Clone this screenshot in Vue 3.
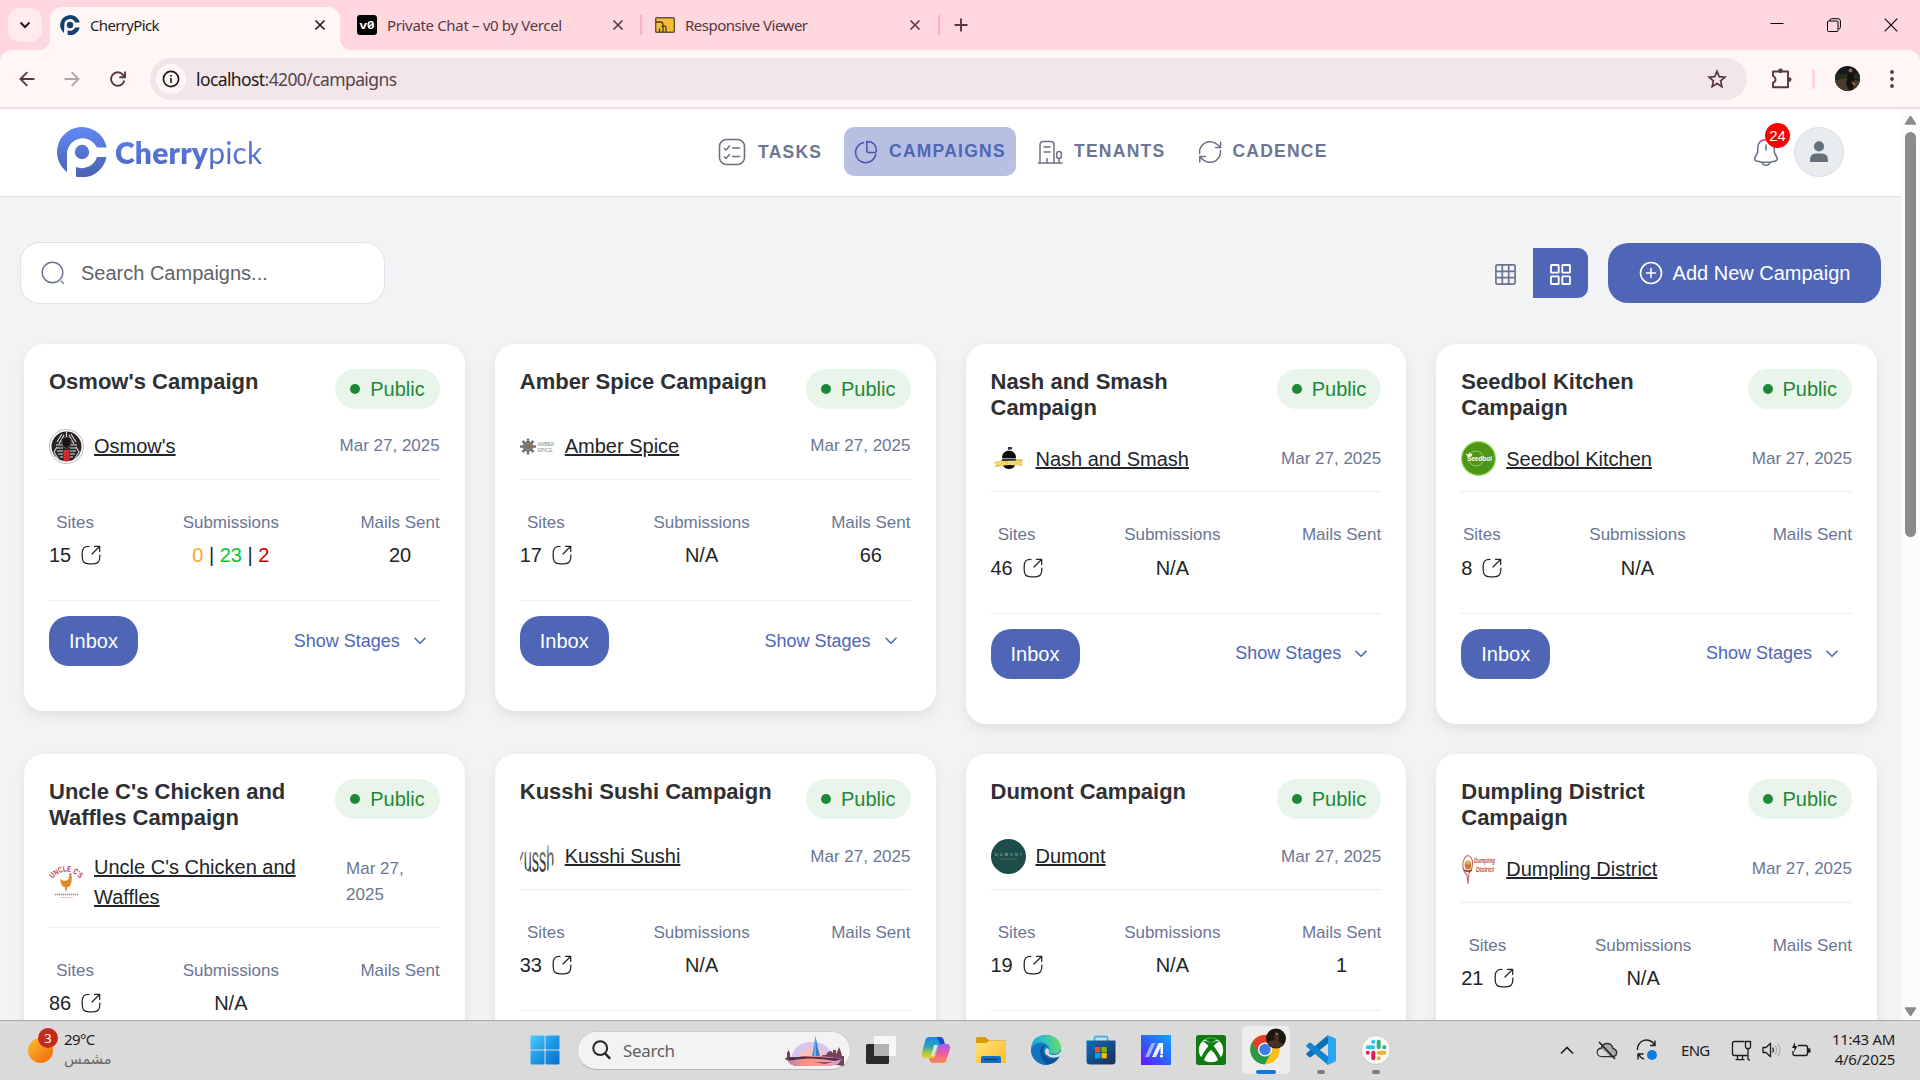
<script setup>
const campaigns = [
  { id: 'osmow', title: "Osmow's Campaign", tenant: "Osmow's", sites: 15, split: [0, 23, 2], mails: '20' },
  { id: 'amber', title: 'Amber Spice Campaign', tenant: 'Amber Spice', sites: 17, mails: '66' },
  { id: 'nash', title: 'Nash and Smash Campaign', tenant: 'Nash and Smash', sites: 46, mails: '' },
  { id: 'seedbol', title: 'Seedbol Kitchen Campaign', tenant: 'Seedbol Kitchen', sites: 8, mails: '' },
  { id: 'uncle', title: "Uncle C's Chicken and Waffles Campaign", tenant: "Uncle C's Chicken and Waffles", sites: 86, mails: '' },
  { id: 'kusshi', title: 'Kusshi Sushi Campaign', tenant: 'Kusshi Sushi', sites: 33, mails: '' },
  { id: 'dumont', title: 'Dumont Campaign', tenant: 'Dumont', sites: 19, mails: '1' },
  { id: 'dumpling', title: 'Dumpling District Campaign', tenant: 'Dumpling District', sites: 21, mails: '' },
]
</script>

<template>
  <div class="screen">
    <div class="tabstrip">
      <div class="tabsearch">
        <svg width="12" height="8" viewBox="0 0 12 8"><path d="M1.5 1.5 6 6l4.500-4.500" fill="none" stroke="#1f1a1b" stroke-width="2" /></svg>
      </div>
      <div class="tab active">
        <svg class="fav" width="20" height="20" viewBox="0 0 50 50" fill="#12406f"><path d="M10 45A25 25 0 1 1 49.600 19H38A14 14 0 0 0 11 25Z" /><path d="M49.600 31A25 25 0 0 1 19 49.300V38A14 14 0 0 0 38 31Z" /><circle cx="25" cy="25" r="8" /></svg>
        <span class="tabname t1">CherryPick</span>
        <svg class="x" width="12" height="12" viewBox="0 0 12 12"><path d="M1.500 1.500l9 9m0-9l-9 9" stroke="#1f1a1b" stroke-width="1.700" /></svg>
      </div>
      <div class="tab second">
        <svg class="fav" width="20" height="20" viewBox="0 0 20 20"><rect width="20" height="20" rx="3" fill="#000" /><text x="2.500" y="13.700" font-size="11" font-weight="bold" textLength="15" lengthAdjust="spacingAndGlyphs" class="mini" fill="#fff">v0</text><path d="M11.500 12.500l4.500-4.500" stroke="#fff" stroke-width="1.200" /></svg>
        <span class="tabname t2">Private Chat – v0 by Vercel</span>
        <svg class="x" width="12" height="12" viewBox="0 0 12 12"><path d="M1.500 1.500l9 9m0-9l-9 9" stroke="#56393f" stroke-width="1.600" /></svg>
      </div>
      <i class="tabsep"></i>
      <div class="tab third">
        <svg class="fav" width="20" height="16" viewBox="0 0 20 16"><rect x=".7" y=".7" width="18.600" height="14.600" rx="1" fill="#f4bf38" stroke="#64543a" stroke-width="1.400" /><path d="M1 5h4.500q2.500 0 2.500 3v7M4.500 15v-3.500M6 9.500q5-2 5 1.500v4" fill="none" stroke="#4a3820" stroke-width="1.300" /></svg>
        <span class="tabname t3">Responsive Viewer</span>
        <svg class="x" width="12" height="12" viewBox="0 0 12 12"><path d="M1.500 1.500l9 9m0-9l-9 9" stroke="#56393f" stroke-width="1.600" /></svg>
      </div>
      <i class="tabsep"></i>
      <svg class="plus" width="14" height="14" viewBox="0 0 14 14"><path d="M7 .5v13M.5 7h13" stroke="#56393f" stroke-width="1.900" /></svg>
      <div class="winctl">
        <svg width="14" height="14" viewBox="0 0 14 14"><path d="M.5 5.500h13" stroke="#000" /></svg>
        <svg width="14" height="14" viewBox="0 0 14 14" fill="none" stroke="#000"><rect x=".5" y="3" width="10.500" height="10.500" rx="1" /><path d="M3 3V2.500Q3 .7 4.500.7H11Q13.400.7 13.400 3V9.500Q13.400 11 11.500 11" /></svg>
        <svg width="14" height="14" viewBox="0 0 14 14"><path d="M.7.7l12.600 12.600M13.300.7.7 13.300" stroke="#000" stroke-width="1.100" /></svg>
      </div>
    </div>

    <div class="toolbarwrap">
      <div class="toolbar">
        <svg class="back" width="16" height="16" viewBox="0 0 16 16"><path d="M15.500 8H1.800M8.300 1.200 1.500 8l6.800 6.800" fill="none" stroke="#56393f" stroke-width="1.900" /></svg>
        <svg class="fwd" width="16" height="16" viewBox="0 0 16 16"><path d="M.5 8h13.700M7.700 1.200 14.500 8l-6.800 6.800" fill="none" stroke="#b4a6a8" stroke-width="1.900" /></svg>
        <svg class="reload" width="16" height="16" viewBox="0 0 16 16"><path d="M14.300 9.500A6.700 6.700 0 1 1 13 3.800L14.600 5.500M15 .5v5.700H9.300" fill="none" stroke="#56393f" stroke-width="1.900" /></svg>
        <div class="omnibox">
          <span class="info"><svg width="18" height="18" viewBox="0 0 18 18"><circle cx="9" cy="9" r="7.600" fill="none" stroke="#1f1a1b" stroke-width="1.700" /><path d="M9 8v5M9 5v1.700" stroke="#1f1a1b" stroke-width="1.600" /></svg></span>
          <span class="url"><b>localhost</b>:4200/campaigns</span>
          <svg class="star" width="20" height="20" viewBox="0 0 20 20"><path d="M10 2.200l2.200 5.400 5.800.5-4.400 3.800 1.300 5.700L10 14.600l-4.900 3 1.300-5.700L2 8.100l5.800-.5z" fill="none" stroke="#56393f" stroke-width="1.700" /></svg>
        </div>
        <svg class="ext" width="22" height="22" viewBox="0 0 22 22"><path d="M3 3.500h15v15.700H3v-4.500q2.500-.8 2.500-3.200T3 8z" fill="none" stroke="#56393f" stroke-width="1.900" stroke-linejoin="round" /><circle cx="10.500" cy="2.800" r="2.300" fill="#56393f" /><circle cx="19.300" cy="11.500" r="2.200" fill="#56393f" /></svg>
        <i class="toolsep"></i>
        <svg class="me" width="25" height="25" viewBox="0 0 25 25"><defs><clipPath id="meclip"><circle cx="12.500" cy="12.500" r="12.500" /></clipPath></defs><g clip-path="url(#meclip)"><rect width="25" height="25" fill="#15181c" /><path d="M0 8h25v5H0z" fill="#222c16" /><path d="M0 14l12-2 13 3v10H0z" fill="#4a3c2b" /><path d="M13 6q3-2 5 1l1 8-1 9h-4l-3-6z" fill="#17120f" /><circle cx="15.500" cy="4.500" r="1.900" fill="#a06a4a" /><path d="M17 16l3 3" stroke="#c07a50" stroke-width="1.500" /></g></svg>
        <svg class="dots" width="4" height="18" viewBox="0 0 4 18" fill="#56393f"><circle cx="2" cy="2" r="1.900" /><circle cx="2" cy="9" r="1.900" /><circle cx="2" cy="16" r="1.900" /></svg>
      </div>
    </div>

    <div class="view">
      <div class="page">
        <header class="head">
          <div class="brand">
            <svg width="50" height="50" viewBox="0 0 50 50"><defs><linearGradient id="lg" x1="0" y1="0" x2="0" y2="50" gradientUnits="userSpaceOnUse"><stop offset="0" stop-color="#6189f5" /><stop offset="1" stop-color="#4a61b0" /></linearGradient></defs><g fill="url(#lg)"><path d="M10 45A25 25 0 1 1 49.600 20.500H40A15.800 15.800 0 0 0 10 25Z" /><path d="M49.600 30A25 25 0 0 1 19 49.600V40A15.800 15.800 0 0 0 40 30Z" /><circle cx="25" cy="25" r="7.200" /></g></svg>
            <span class="word"><b>Cherry</b>pick</span>
          </div>
          <nav>
            <a class="n1"><svg width="28" height="28" viewBox="0 0 28 28" fill="none" stroke="#6b7280" stroke-width="1.600" stroke-linecap="round" stroke-linejoin="round"><rect x="1.500" y="1.500" width="25" height="25" rx="7" /><path d="M14.500 10h7M14.500 18.500h7M6.500 10.500l1.500 1.500 3.500-4M6.500 19l1.500 1.500 3.500-4" /></svg><span>TASKS</span></a>
            <a class="n2"><svg width="24" height="24" viewBox="0 0 24 24" fill="none" stroke="#4a4fb0" stroke-width="1.500" stroke-linejoin="round" stroke-linecap="round"><path d="M21.800 14.200A10.200 10.200 0 1 1 9.500 2.600" /><path d="M12.800 1.600q9.400 0 9.600 9.200 0 1.600-1.600 1.600h-6q-2 0-2-2z" /></svg><span>CAMPAIGNS</span></a>
            <a class="n3"><svg width="26" height="26" viewBox="0 0 26 26" fill="none" stroke="#6b7280" stroke-width="1.500" stroke-linecap="round" stroke-linejoin="round"><path d="M1.500 24H25M3 24V6q0-3.500 3.500-3.500h7Q17 2.500 17 6v18M7 8h6M7 13h6M10 24v-4.500M22 24v-4.500" /><rect x="19.700" y="12.500" width="4.600" height="7" rx="2.200" /></svg><span>TENANTS</span></a>
            <a class="n4"><svg width="24" height="24" viewBox="0 0 24 24" fill="none" stroke="#6b7280" stroke-width="1.500" stroke-linecap="round" stroke-linejoin="round"><path d="M1.700 13.500A10.300 10.300 0 0 1 12 1.700Q17.500 1.700 22.600 7.500M22.600 2.200v5.300h-5M22.300 10.500A10.300 10.300 0 0 1 12 22.300Q6.500 22.300 1.800 16.500M1.800 22v-5.500h5.500" /></svg><span>CADENCE</span></a>
          </nav>
          <div class="right">
            <div class="bell">
              <svg width="26" height="30" viewBox="0 0 26 30" fill="none" stroke="#6b7391" stroke-width="1.600" stroke-linecap="round" stroke-linejoin="round"><path d="M13 2.700q-8 0-8.300 8.300v3.500q0 1.500-1 3l-1.700 3q-1 2.500 1.500 3.500 9.500 2.600 19 0 2.500-1 1.500-3.500l-1.700-3q-1-1.500-1-3V11Q21 2.700 13 2.700zM13 8v5M8.500 25q1.500 3.300 4.500 3.300t4.500-3.300" /></svg>
              <span class="count">24</span>
            </div>
            <div class="user"><svg width="18" height="21" viewBox="0 0 18 21" fill="#66707a"><circle cx="9" cy="5.400" r="5.100" /><path d="M0 21v-2q0-6.500 6-6.500h6q6 0 6 6.500v2z" /></svg></div>
          </div>
        </header>

        <div class="bar">
          <div class="search">
            <svg width="24" height="24" viewBox="0 0 24 24" fill="none" stroke="#6b7391" stroke-width="1.400" stroke-linecap="round"><circle cx="11.500" cy="11.500" r="10.300" /><path d="M20.300 20.300l2 2" /></svg>
            <span>Search Campaigns...</span>
          </div>
          <div class="actions">
            <div class="toggle">
              <span class="off"><svg width="21" height="21" viewBox="0 0 21 21" fill="none" stroke="#6b7391" stroke-width="1.700"><rect x=".9" y=".9" width="19.200" height="19.200" rx="1.500" /><path d="M7.300 1v19M13.700 1v19M1 7.300h19M1 13.700h19" /></svg></span>
              <span class="on"><svg width="21" height="21" viewBox="0 0 21 21" fill="none" stroke="#fff" stroke-width="1.800"><rect x="1" y="1" width="7.700" height="7.700" rx=".6" /><rect x="12.300" y="1" width="7.700" height="7.700" rx=".6" /><rect x="1" y="12.300" width="7.700" height="7.700" rx=".6" /><rect x="12.300" y="12.300" width="7.700" height="7.700" rx=".6" /></svg></span>
            </div>
            <div class="add">
              <svg width="24" height="24" viewBox="0 0 24 24" fill="none" stroke="#fff" stroke-width="1.600" stroke-linecap="round"><circle cx="12" cy="12" r="10.500" /><path d="M12 7.500v9M7.500 12h9" /></svg>
              <span>Add New Campaign</span>
            </div>
          </div>
        </div>

        <div class="grid">
          <section v-for="c in campaigns" :key="c.id" class="card">
            <div class="top">
              <h3>{{ c.title }}</h3>
              <span class="badge"><i></i><span>Public</span></span>
            </div>
            <div class="who">
              <div class="tenant">
                <svg v-if="c.id === 'osmow'" width="35" height="35" viewBox="0 0 35 35"><circle cx="17.500" cy="17.500" r="17" fill="#fff" stroke="#aaa" stroke-width=".8" /><circle cx="17.500" cy="17.500" r="15" fill="#292426" /><path d="M8 13l5-8M27 13l-5-8M10 15l5-9M25 15l-5-9M7 16h7M21 16h7M7 19h7M21 19h7M8 22h6M21 22h6M9 25h5M21 25h5M11 28h3M21 28h3M17.500 3v5M8 18l-3 5 5 8M27 18l3 5-5 8" stroke="#ddd" stroke-width="1.100" fill="none" /><path d="M12.500 10q5-4 10 0l-1 7-4 2.500-4-2.500z" fill="#191516" stroke="#999" stroke-width=".5" /><path d="M14.500 21h6v11h-6z" fill="#df2a34" /><path d="M15.500 24.500l4-1M15.500 27.500l4-1M15.500 30.500l4-1" stroke="#b0121e" stroke-width=".8" /></svg>
                <svg v-else-if="c.id === 'amber'" class="logo" width="35" height="35" viewBox="0 0 35 35"><g stroke="#777" stroke-width="2.600"><path d="M8 9.500v16M0 17.500h16M2.500 12l11 11M13.500 12l-11 11" /></g><circle cx="8" cy="17.500" r="5" fill="#666" /><circle cx="8" cy="17.500" r="3.200" fill="none" stroke="#aaa" stroke-width=".7" /><circle cx="8" cy="17.500" r="1.200" fill="#c87a3a" /><text x="17.500" y="16.800" font-size="5.700" textLength="17" lengthAdjust="spacingAndGlyphs" class="mini" fill="#888">AMBER</text><text x="17.500" y="22.800" font-size="5.700" textLength="16" lengthAdjust="spacingAndGlyphs" class="mini" fill="#888">SPICE.</text></svg>
                <svg v-else-if="c.id === 'nash'" class="logo" width="35" height="35" viewBox="0 0 35 35"><path d="M17 9V6h4v2.500h-3" fill="#333" /><path d="M11 17q0-7 7-7.500 7 .5 7 7.500z" fill="#0c0c0c" /><path d="M12 24q1 4 6 4t6-4z" fill="#0c0c0c" /><path d="M3 21q6-1.500 14.500-2Q26 18 32 18.500l-1.500 3.500 1 3q-7-1-13.500-1-7 .500-14.500 2l1.500-2.500z" fill="#ecbd37" /><path d="M11.500 17.500h13l1 2-15 .8z" fill="#333" /><text x="5" y="24.200" font-size="5" textLength="25" lengthAdjust="spacingAndGlyphs" class="mini" font-weight="bold" fill="#fbe9b0">NASH SMASH</text></svg>
                <svg v-else-if="c.id === 'seedbol'" class="logo" width="35" height="35" viewBox="0 0 35 35"><circle cx="17.500" cy="17.500" r="16.900" fill="#4f9516" stroke="#8ee05c" stroke-width="1.200" /><circle cx="15" cy="17.500" r="7.500" fill="none" stroke="#b9d7a0" stroke-width=".7" /><path d="M4.500 12.500l3 1 1-2.500 1 2.500 2-1.500-1 3.500-3 1z" fill="#fff" /><rect x="6" y="15.500" width="25" height="5" fill="#4f9516" /><text x="6" y="20.200" font-size="6.500" textLength="25" lengthAdjust="spacingAndGlyphs" class="mini" font-weight="bold" fill="#fff">Seedbol</text></svg>
                <svg v-else-if="c.id === 'uncle'" class="logo" width="35" height="35" viewBox="0 0 35 35"><defs><path id="arc" d="M3.500 15Q17.500 0 31.500 15" /></defs><text font-size="8" font-weight="bold" class="mini" fill="#b8433a"><textPath href="#arc" textLength="32" lengthAdjust="spacingAndGlyphs">UNCLE C'S</textPath></text><path d="M11 15q3 3 8 1l1.500-5 2.500 1-.5 6q-1 5-4.500 5.500v3h-2v-3q-4.500-1.500-5-8.500z" fill="#e0922f" /><path d="M20 11l1-2 2 2z" fill="#b8433a" /><path d="M13 18h8M14 21h7" stroke="#b87420" stroke-width=".6" /><path d="M6 30.500h23" stroke="#888" stroke-width="1.700" stroke-dasharray="1.300 .7" /><path d="M11 33.500h13" stroke="#dba0a0" stroke-width=".6" /></svg>
                <svg v-else-if="c.id === 'kusshi'" width="35" height="35" viewBox="0 0 35 35"><defs><linearGradient id="fade" x1="0" y1="0" x2="0" y2="1"><stop offset=".1" stop-color="#bbb" /><stop offset=".6" stop-color="#3c3c3c" /></linearGradient><clipPath id="kc"><circle cx="17.500" cy="17.500" r="17.500" /></clipPath></defs><g clip-path="url(#kc)"><text transform="translate(-3.500 32.500) scale(1 2.600)" x="0" y="0" font-size="14.500" textLength="41" lengthAdjust="spacingAndGlyphs" class="mini" fill="url(#fade)">kusshi</text></g></svg>
                <svg v-else-if="c.id === 'dumont'" class="logo" width="35" height="35" viewBox="0 0 35 35"><circle cx="17.500" cy="17.500" r="17.500" fill="#1d4d49" /><text x="4" y="17.200" font-size="3.600" textLength="27" class="mini" fill="#bccfcb">DUMONT</text><path d="M9 20h17" stroke="#88836b" stroke-width=".7" stroke-dasharray="1.500 .8" /></svg>
                <svg v-else class="logo" width="35" height="35" viewBox="0 0 35 35"><path d="M6.500 3.500q5.500 1 5 9-.5 6-3.500 8.500L7 32l-1-9Q1 18 2 11q1-6 4.500-7.500z" fill="none" stroke="#c5695a" stroke-width="1.100" /><ellipse cx="7" cy="13" rx="3.300" ry="4.500" fill="#c87b36" /><circle cx="7" cy="10.500" r="2" fill="#e8b24f" /><path d="M3 18q4 2.500 8 0" stroke="#b43c36" stroke-width="2" fill="none" /><text x="13" y="11" font-size="6.800" textLength="21" lengthAdjust="spacingAndGlyphs" class="mini" font-style="italic" font-weight="bold" fill="#bb4a43">Dumpling</text><text x="15" y="19.500" font-size="6.800" textLength="18" lengthAdjust="spacingAndGlyphs" class="mini" font-style="italic" font-weight="bold" fill="#bb4a43">District</text></svg>
                <a>{{ c.tenant }}</a>
              </div>
              <span class="date">Mar 27, 2025</span>
            </div>
            <div class="stats">
              <div>
                <label>Sites</label>
                <p class="sites"><span>{{ c.sites }}</span><svg width="20" height="20" viewBox="0 0 20 20" fill="none" stroke="#212529" stroke-width="1.250" stroke-linecap="round" stroke-linejoin="round"><path d="M11 9l7.500-7.500M13.500 1.300h5.200v5.200M8 1.500Q1.200 1 1.200 8v4q0 6.800 6.800 6.800h4q6.800 0 6.800-6.800v-2" /></svg></p>
              </div>
              <div>
                <label>Submissions</label>
                <p v-if="c.split"><span class="pending">{{ c.split[0] }}</span> | <span class="ok">{{ c.split[1] }}</span> | <span class="bad">{{ c.split[2] }}</span></p>
                <p v-else>N/A</p>
              </div>
              <div>
                <label>Mails Sent</label>
                <p>{{ c.mails }}</p>
              </div>
            </div>
            <div class="foot">
              <span class="inbox">Inbox</span>
              <span class="stages">Show Stages<svg width="12" height="8" viewBox="0 0 12 8"><path d="M1 1.200l5 5 5-5" fill="none" stroke="#4e66b5" stroke-width="1.600" stroke-linecap="round" stroke-linejoin="round" /></svg></span>
            </div>
          </section>
        </div>
      </div>
      <div class="scroll">
        <svg width="13" height="10" viewBox="0 0 13 10"><path d="M6.500 1.500L11.500 9h-10z" fill="#8b8b8b" stroke="#8b8b8b" stroke-linejoin="round" stroke-width="1.500" /></svg>
        <i class="thumb"></i>
        <svg class="down" width="13" height="10" viewBox="0 0 13 10"><path d="M6.500 8.500L11.500 1h-10z" fill="#8b8b8b" stroke="#8b8b8b" stroke-linejoin="round" stroke-width="1.500" /></svg>
      </div>
    </div>

    <footer class="taskbar">
      <div class="weather">
        <div class="sun"><span>3</span></div>
        <div class="wtext"><span>29°C</span><span class="ar" dir="rtl" lang="ar">مشمس</span></div>
      </div>
      <div class="apps">
        <svg class="start" width="30" height="30" viewBox="0 0 30 30"><defs><linearGradient id="win" x1="0" y1="0" x2="30" y2="30" gradientUnits="userSpaceOnUse"><stop offset="0" stop-color="#4cd0ff" /><stop offset=".5" stop-color="#1f98e4" /><stop offset="1" stop-color="#0070cf" /></linearGradient></defs><g fill="url(#win)"><rect x=".5" y=".5" width="14" height="14" rx="1" /><rect x="15.500" y=".5" width="14" height="14" rx="1" /><rect x=".5" y="15.500" width="14" height="14" rx="1" /><rect x="15.500" y="15.500" width="14" height="14" rx="1" /></g></svg>
        <div class="tsearch">
          <svg width="19" height="20" viewBox="0 0 19 20"><circle cx="8.200" cy="8.200" r="6.900" fill="none" stroke="#262626" stroke-width="2" /><path d="M13 13.300l4.500 4.800" stroke="#262626" stroke-width="2.400" stroke-linecap="round" /></svg>
          <span>Search</span>
          <svg class="city" width="60" height="31" viewBox="0 0 60 31"><defs><linearGradient id="river" x1="0" y1="0" x2="1" y2="0"><stop offset="0" stop-color="#b483c2" /><stop offset=".35" stop-color="#fb937c" /><stop offset=".7" stop-color="#f79aa0" /><stop offset="1" stop-color="#c5a0dd" /></linearGradient></defs><path d="M7 23Q11 7 28 7t22 16z" fill="#d7c5ee" /><path d="M14 23q3-10 15-10t15 10z" fill="#f9c3bd" /><path d="M1 24l2-2v-4l1.500-3 1.500 3v4h8l6-1 7 .5h10l2-1.500h3l2-3 3-1 2 2v-3h3v4l2-4 1-3 2 5 1 4h3v5l2 2-3 3q-25-5-49 0z" fill="#754156" /><path d="M28 21.500q2-9 3.500-20.500Q33.500 12 36 21.500z" fill="#2a83d4" /><path d="M31.500 1L32 21.500h-2.500z" fill="#65b6f0" /><path d="M2 24q28-6 56 0l-4 5q-4 2-10 2H17q-8 0-11-2z" fill="url(#river)" /><path d="M1 23.500q15-2.500 32-1.500 14 .5 25 2l-7 2q-14-3-28-2.500-8 .5-17 2z" fill="#4d2e42" /><path d="M30 27h18l-7 2z" fill="#8d4b63" /></svg>
        </div>
        <svg class="tv" width="30" height="30" viewBox="0 0 30 30"><rect x="0" y="9" width="23" height="20" rx="1.500" fill="#2b2b2a" /><rect x="8" y="1" width="22" height="20" rx="1.500" fill="#fafafa" fill-opacity=".92" /><path d="M8 9h15v12H8z" fill="#b3b3b3" /></svg>
        <svg class="app" width="30" height="30" viewBox="0 0 30 30"><defs><linearGradient id="cpa" x1="0" y1="0" x2="0" y2="1"><stop offset="0" stop-color="#168be8" /><stop offset=".45" stop-color="#26a6b5" /><stop offset=".75" stop-color="#a7c83c" /><stop offset="1" stop-color="#f6cd24" /></linearGradient><linearGradient id="cpb" x1="0" y1="0" x2="0" y2="1"><stop offset="0" stop-color="#a45bed" /><stop offset=".5" stop-color="#ed5ca0" /><stop offset="1" stop-color="#fb8c4c" /></linearGradient></defs><path d="M8 2h11q3 0 4 4l1 4h-4q-2 0-3 3l-1.500 5Q14 23 10 23H5q-5 0-4-5L4 6q1-4 4-4z" fill="url(#cpa)" /><path d="M15 2h4q3 0 4 4l1 4h-5q-2-8-4-8z" fill="#1b49c8" /><path d="M22 28H12q-3 0-4-4v-1h3q3 0 4-4l2-6q1-4 4-4h5q3.500 0 3 5l-3 9q-1 5-4 5z" fill="url(#cpb)" /><path d="M13 10h4l-4 11h-3z" fill="#dedede" /></svg>
        <svg class="app" width="30" height="30" viewBox="0 0 30 30"><defs><linearGradient id="fo" x1="0" y1="0" x2="1" y2="1"><stop offset="0" stop-color="#ffe17a" /><stop offset="1" stop-color="#fdbd29" /></linearGradient></defs><path d="M0 3.500Q0 2 1.500 2h8l3.500 3.500h17V11H0z" fill="#dc9a09" /><path d="M0 8h10.500l2.500-2H28.500Q30 6 30 7.500v19q0 1.500-1.500 1.500h-27Q0 28 0 26.500z" fill="url(#fo)" /><path d="M5 28v-5q0-2 2-2h16q2 0 2 2v5z" fill="#1570c4" /><path d="M8.500 24.500h13" stroke="#0b3f78" stroke-width="1.300" stroke-linecap="round" /></svg>
        <svg class="app" width="30" height="30" viewBox="0 0 30 30"><defs><linearGradient id="eg" x1="0" y1=".6" x2="1" y2=".4"><stop offset="0" stop-color="#1ba0e6" /><stop offset=".5" stop-color="#32c2bf" /><stop offset="1" stop-color="#6fe05c" /></linearGradient></defs><circle cx="15" cy="15" r="15" fill="#157cca" /><path d="M0 14Q1 0 15 0q14 1 15 12 0 6.500-7 7-6 0-5-3 1-1.500 0-3.500Q15 7 9 7.500 3 8 0 14z" fill="url(#eg)" /><path d="M9 16q1-6 6-6.500Q6 7 0 14q0 9 8 14 5 3 10 1.500Q9 25 9 16z" fill="#1173c4" /><path d="M9 16q1-6 6-6-4 3-2.500 8 3 6 10 5 3-.500 6-2-4 8-12 8.500Q10 27 9 16z" fill="#114f9c" /><path d="M18 16.500q-1 4 6 3.500 4-.500 6-4v5q-9 4-15-1.500-2-3 0-6 3-1 3 3z" fill="#dadada" /></svg>
        <svg class="app" width="30" height="30" viewBox="0 0 30 30"><defs><linearGradient id="ms" x1="0" y1="0" x2="1" y2="1"><stop offset="0" stop-color="#0d6dbd" /><stop offset="1" stop-color="#1f2c52" /></linearGradient></defs><path d="M8.500 6V3q0-1.300 1.300-1.300h10.400q1.300 0 1.300 1.300v3" fill="none" stroke="#30b6ea" stroke-width="1.700" /><path d="M.5 5.500h29V26q0 3.500-3.500 3.500H4Q.5 29.500.5 26z" fill="url(#ms)" /><path d="M9 12h5.300v5.300H9z" fill="#f25022" /><path d="M15.500 12h5.300v5.300h-5.300z" fill="#7fba00" /><path d="M9 18h5.300v5.300H9z" fill="#00a4ef" /><path d="M15.500 18h5.300v5.300h-5.300z" fill="#ffb900" /></svg>
        <svg class="app" width="30" height="30" viewBox="0 0 30 30"><defs><linearGradient id="ma" x1="1" y1="0" x2="0" y2="1"><stop offset="0" stop-color="#0ca4ff" /><stop offset=".5" stop-color="#2b62fa" /><stop offset="1" stop-color="#6d12ff" /></linearGradient></defs><path d="M0 0h30v30H0z" fill="url(#ma)" /><path d="M4 22L10.500 8h4L8 22z" fill="#9db0ff" /><path d="M11 22L17.500 8h4L15 22z" fill="#f0f3ff" /><path d="M19.500 8h2.500v11h-2.500z" fill="#fff" /><circle cx="20.500" cy="21" r="1.600" fill="#fff" /></svg>
        <svg class="app" width="30" height="30" viewBox="0 0 30 30"><rect width="30" height="30" rx="2.500" fill="#107c10" /><circle cx="15" cy="15" r="12.200" fill="#fff" /><path d="M8.500 5q3 0 6.500 3.500Q18.500 5 21.500 5q-6-4-13 0zM15 8.500Q10 5 6.500 6.500q3.500 1 6 4.500-5 5.500-8.500 14l3.500 2Q9 20.500 15 14.800q6 5.700 7.500 12.200l3.500-2q-3.500-8.500-8.500-14 2.500-3.500 6-4.500Q20 5 15 8.500z" fill="#107c10" /></svg>
        <div class="app chrome">
          <svg width="38" height="37" viewBox="0 0 38 37"><circle cx="15" cy="21.500" r="14.800" fill="#fbc116" /><path d="M2 14.500A15 15 0 0 1 28 14.500L15 15l-6.500 10.300z" fill="#e33b2e" /><path d="M2 14.300A15 15 0 0 0 14.500 36.500L21 25.300Q13 30 8.700 25.300z" fill="#27994a" /><circle cx="15" cy="21.500" r="7" fill="#fff" /><circle cx="15" cy="21.500" r="5.700" fill="#3b7ded" /><circle cx="26" cy="10.500" r="10" fill="#1d1711" /><path d="M17 14q6-3 12 0l5 3q-6 5-14 1z" fill="#443527" /><path d="M25 4q3 0 4 6l-1 8-4-1z" fill="#4b3020" /><circle cx="27" cy="6" r="1.300" fill="#96674b" /></svg>
          <i class="run"></i>
        </div>
        <div class="app vs">
          <svg width="30" height="30" viewBox="0 0 30 30"><path d="M22 0v8.500L5 22q-1 .8-2 0L.8 20q-1.200-1 0-2z" fill="#0a71b8" /><path d="M22 30v-8.500L5 8q-1-.8-2 0L.8 10q-1.200 1 0 2z" fill="#0e85d0" /><path d="M21.500 0L28.500 3Q30 3.700 30 5v20q0 1.300-1.500 2l-7 3-1-1.500Q22 28 22 26V4q0-2-1.500-2.500z" fill="#29a5f1" /></svg>
          <i class="dot"></i>
        </div>
        <div class="app vs">
          <svg width="30" height="30" viewBox="0 0 30 30"><circle cx="15" cy="15" r="14.500" fill="#f8f8f8" stroke="#bbb" stroke-width=".7" /><g stroke-width="4" stroke-linecap="round" fill="none"><path d="M12.300 12.300H6.800M12.300 6.800v.1" stroke="#3ac3ec" /><path d="M17.700 12.300V6.800M23.200 12.300h.1" stroke="#2fb37c" /><path d="M17.700 17.700h5.500M17.700 23.200v.1" stroke="#eab22e" /><path d="M12.300 17.700v5.500M6.800 17.700v.1" stroke="#df1d5a" /></g></svg>
          <i class="dot"></i>
        </div>
      </div>
      <div class="tray">
        <svg class="up" width="14" height="9" viewBox="0 0 14 9"><path d="M1 7.500L7 1.500l6 6" fill="none" stroke="#1c1c1c" stroke-width="1.600" /></svg>
        <svg class="cloud" width="22" height="20" viewBox="0 0 22 20"><path d="M6 16.500h10.500q4 0 4.200-4-.2-3-3.700-4Q16 3.500 11 3.500 6.500 3.500 5.500 8 1.500 8.500 1.300 12q.2 4.500 4.700 4.500z" fill="#aaa" stroke="#333" stroke-width="1.400" /><path d="M6 16q-4 0-4.200-3.500Q2 9.500 6 9.500L13.500 16z" fill="#ddd" /><path d="M3 2l16 17" stroke="#1c1c1c" stroke-width="1.500" /></svg>
        <svg class="sync" width="22" height="22" viewBox="0 0 22 22"><path d="M1.500 11A9 9 0 0 1 18.500 6M19 1.500v5h-5M8 20Q4 18.500 2.500 15M2 20.500v-5.500h5.500" fill="none" stroke="#1c1c1c" stroke-width="1.400" /><circle cx="16" cy="16" r="5" fill="#0f7bdc" /></svg>
        <span class="eng">ENG</span>
        <svg class="net" width="21" height="21" viewBox="0 0 21 21"><path d="M13.500 1.500h-10q-2 0-2 2v10q0 2 2 2h13M6.500 15.500v4M11.500 15.500v4M4.500 19.700h9" fill="none" stroke="#1c1c1c" stroke-width="1.300" /><path d="M14.500 1.500h5v5.500l-1 1.500h-3l-1-1.500zM17 8.500v11q0 .5 2 .5" fill="none" stroke="#1c1c1c" stroke-width="1.300" /></svg>
        <svg class="vol" width="20" height="18" viewBox="0 0 20 18"><path d="M1 6.500h3L8.500 2.300v13.400L4 11.500H1z" fill="none" stroke="#1c1c1c" stroke-width="1.300" stroke-linejoin="round" /><path d="M10.500 6.500q1.800 2.500 0 5" fill="none" stroke="#1c1c1c" stroke-width="1.200" /><path d="M13 4.500q3.500 4.500 0 9M15.500 2.500q5 6.500 0 13" fill="none" stroke="#aaa" stroke-width="1.200" /></svg>
        <svg class="bat" width="20" height="18" viewBox="0 0 20 18"><path d="M7 4.500h7.500q2 0 2 2v6q0 2-2 2H4q-2 0-2-2V10M17.500 7.500v4" fill="none" stroke="#1c1c1c" stroke-width="1.400" /><path d="M17 7.500h2.500v4H17z" fill="#1c1c1c" /><path d="M4 1L1 7h2.500L3 11l3.500-6H4z" fill="#1c1c1c" /></svg>
        <div class="clock"><span>11:43 AM</span><span>4/6/2025</span></div>
      </div>
    </footer>
  </div>
</template>

<style>
body { margin: 0; overflow: hidden; }
</style>

<style scoped>
* { box-sizing: border-box; }
svg { display: block; flex: none; }
.screen { width: 1920px; height: 1080px; display: flex; flex-direction: column; overflow: hidden; background: #f1f3f5; font-family: "Liberation Sans", Arial, sans-serif; color: #212529; }
.logo { overflow: visible; }
.mini { font-family: "Liberation Sans", Arial, sans-serif; letter-spacing: 0; }

.tabstrip { height: 50px; flex: none; background: #ffd7df; display: flex; align-items: center; font-family: "Noto Sans", "Open Sans", sans-serif; }
.tabsearch { width: 34px; height: 34px; margin-left: 8px; border-radius: 12px; background: #ffebee; display: flex; align-items: center; justify-content: center; }
.tab { height: 43px; display: flex; align-items: center; align-self: flex-end; font-size: 15px; color: #56393f; white-space: nowrap; padding-bottom: 7px; }
.tab .x { margin-left: auto; }
.tab.active { position: relative; width: 290px; margin-left: 8px; padding: 0 14px 7px 10px; background: #fff7f6; border-radius: 12px 12px 0 0; color: #1f1a1b; }
.tab.active::before, .tab.active::after { content: ""; position: absolute; bottom: 0; width: 12px; height: 12px; }
.tab.active::before { left: -12px; background: radial-gradient(circle at 0 0, transparent 12px, #fff7f6 12.500px); }
.tab.active::after { right: -12px; background: radial-gradient(circle at 100% 0, transparent 12px, #fff7f6 12.500px); }
.tab.second { width: 300px; padding-left: 17px; padding-right: 16px; }
.tab.third { width: 296px; padding-left: 13px; padding-right: 17px; }
.tabname { margin-left: 10px; }
.t1 { letter-spacing: -.65px; }
.t2 { letter-spacing: -.34px; }
.t3 { letter-spacing: -.5px; }
.tabsep { width: 2px; height: 20px; background: #ffafc0; }
.plus { margin-left: 14px; }
.winctl { margin-left: auto; display: flex; gap: 43px; padding-right: 22px; }

.toolbarwrap { height: 59px; flex: none; background: #ffd7df; }
.toolbar { height: 59px; display: flex; align-items: center; background: #fff7f6; border-radius: 12px 12px 0 0; border-bottom: 2px solid #f3dbe1; font-family: "Noto Sans", "Open Sans", sans-serif; }
.back { margin-left: 19px; }
.fwd { margin-left: 29px; }
.reload { margin-left: 30px; }
.omnibox { width: 1597px; height: 42px; margin: 1px 0 0 24px; border-radius: 21px; background: #f2e6ea; display: flex; align-items: center; }
.info { width: 30px; height: 30px; margin-left: 6px; border-radius: 50%; background: #fff7f6; display: flex; align-items: center; justify-content: center; }
.url { margin-left: 10px; font-size: 17.500px; letter-spacing: -.6px; color: #56454a; }
.url b { font-weight: 400; color: #1f1a1b; }
.star { margin-left: auto; margin-right: 20px; }
.ext { margin-left: 23px; }
.toolsep { width: 2.500px; height: 20px; margin-left: 20px; background: #ffd7df; border-radius: 1px; }
.me { margin-left: 20px; }
.dots { margin-left: 30px; }

.view { height: 911px; flex: none; display: flex; overflow: hidden; }
.page { width: 1901px; flex: none; overflow: hidden; }
.scroll { width: 19px; background: #fcfcfc; display: flex; flex-direction: column; align-items: center; padding: 6px 0 3px; }
.thumb { width: 11px; height: 405px; margin-top: 7px; border-radius: 6px; background: #8b8b8b; }
.down { margin-top: auto; }

.head { height: 88px; background: #fff; border-bottom: 1px solid #e3e5e8; display: flex; align-items: center; }
.brand { width: 661px; padding-left: 57px; display: flex; align-items: center; padding-bottom: 1px; }
.word { margin-left: 8px; font-family: Lato, sans-serif; font-size: 30px; letter-spacing: .2px; line-height: 36px; font-weight: 400; background: linear-gradient(#5f83ea, #4d68bd); background-clip: text; color: transparent; }
.word b { font-weight: 800; }
nav { display: flex; align-items: center; font-size: 17.500px; font-weight: 700; letter-spacing: 1.250px; color: #6c7694; padding-bottom: 2px; }
nav a { display: flex; align-items: center; height: 49px; }
.n1 { width: 183px; padding-left: 57px; }
.n1 span { margin: 1px 0 0 12px; }
.n1 svg { margin-top: 1px; }
.n2 { width: 172px; padding-left: 10px; border-radius: 10px; background: #b7c0e1; color: #4e66b5; }
.n2 span { margin-left: 11px; }
.n3 { padding-left: 21px; }
.n3 span { margin-left: 11px; }
.n4 { padding-left: 33px; }
.n4 span { margin-left: 10px; }
.right { margin-left: auto; margin-right: 57px; display: flex; align-items: center; gap: 15px; padding-bottom: 2px; }
.bell { position: relative; width: 26px; height: 30px; }
.count { position: absolute; left: 12px; top: -14px; width: 25px; height: 25px; border-radius: 50%; background: #f00; color: #fff; font-size: 15px; line-height: 25px; text-align: center; }
.user { width: 50px; height: 50px; border-radius: 50%; background: #e9ecef; border: 1.500px solid #dcdfe2; display: flex; align-items: center; justify-content: center; }

.bar { margin: 45px 20px 0; height: 62px; display: flex; align-items: center; justify-content: space-between; }
.search { width: 365px; height: 62px; border: 1px solid #dee2e6; border-radius: 20px; background: #fff; display: flex; align-items: center; padding-left: 20px; font-size: 20px; color: #5f6368; }
.search span { margin-left: 16px; }
.actions { display: flex; align-items: center; gap: 20px; }
.toggle { display: flex; height: 50px; border-radius: 10px; overflow: hidden; }
.toggle span { width: 55px; display: flex; align-items: center; justify-content: center; padding-top: 3px; }
.off { background: #f4f4f4; }
.on { background: #4e66b5; }
.add { width: 273px; height: 60px; border-radius: 20px; background: #4e66b5; color: #fff; font-size: 20px; display: flex; align-items: center; justify-content: center; gap: 10px; white-space: nowrap; }

.grid { display: grid; grid-template-columns: repeat(4, 440.750px); gap: 30px; margin: 39.600px 24px 0; align-items: start; }
.card { background: #fff; border-radius: 20px; padding: 25px 25px 45px; box-shadow: 0 5px 12px rgba(0, 0, 0, .08); }
.top { display: flex; justify-content: space-between; align-items: flex-start; gap: 12px; }
h3 { margin: 0; font-size: 22px; line-height: 26.400px; font-weight: 700; color: #2f3033; }
.badge { flex: none; height: 40px; padding: 0 15px; border-radius: 20px; background: #e9f5eb; color: #1f8838; font-size: 20px; display: flex; align-items: center; gap: 10px; }
.badge i { width: 10px; height: 10px; border-radius: 50%; background: #1f8838; }
.badge span { padding-top: 1px; }
.who { display: flex; justify-content: space-between; align-items: center; margin-top: 20px; padding-bottom: 15px; border-bottom: 1px solid #ebedef; }
.tenant { display: flex; align-items: center; gap: 10px; }
.tenant a { font-size: 20px; line-height: 30px; text-decoration: underline; }
.date { font-size: 17px; line-height: 25.500px; color: #6c7694; }
.stats { display: flex; justify-content: space-between; padding: 30px 0; border-bottom: 1px solid #ebedef; text-align: center; }
label { display: block; font-size: 17px; line-height: 25.500px; color: #6c7694; }
p { margin: 5px 0 0; font-size: 20px; line-height: 30px; min-height: 30px; }
.sites { display: flex; align-items: center; gap: 10px; }
.pending { color: #ffa51f; }
.ok { color: #00cc33; }
.bad { color: #cc0000; }
.foot { display: flex; justify-content: space-between; align-items: center; margin-top: 15px; }
.inbox { height: 50px; width: 89px; border-radius: 20px; background: #4e66b5; color: #fff; font-size: 20px; line-height: 50px; text-align: center; }
.stages { display: flex; align-items: center; gap: 14px; padding-right: 14px; font-size: 18px; color: #4e66b5; }

.taskbar { height: 60px; flex: none; background: #dadada; border-top: 1px solid #ababab; display: flex; align-items: center; justify-content: space-between; padding-bottom: 1px; font-family: "Noto Sans", "Open Sans", sans-serif; color: #1c1c1c; }
.weather { width: 530px; display: flex; align-items: center; }
.sun { position: relative; width: 25px; height: 25px; margin-left: 28px; border-radius: 50%; background: linear-gradient(135deg, #fbc02b, #f2630f); }
.sun span { position: absolute; left: 10px; top: -10px; width: 20px; height: 20px; border-radius: 50%; background: #c62a1d; color: #fff; font-size: 13px; line-height: 20px; text-align: center; }
.wtext { display: flex; flex-direction: column; margin-left: 11px; font-size: 15px; line-height: 20px; letter-spacing: -.6px; margin-top: -2px; }
.ar { font-family: "DejaVu Sans", sans-serif; font-size: 14.500px; letter-spacing: 0; color: #666; }
.apps { display: flex; align-items: center; flex: none; width: 861px; }
.tsearch { width: 274px; height: 39px; margin-left: 17px; border-radius: 20px; background: #f3f3f3; border: 1px solid #cfcfcf; border-bottom-color: #b5b5b5; display: flex; align-items: center; padding-left: 14px; font-size: 17px; letter-spacing: -.35px; color: #606060; }
.tsearch span { margin-left: 12px; }
.city { margin-left: auto; margin-right: 6px; }
.start { margin-left: 0; }
.tv { margin-left: 15px; }
.app { margin-left: 25px; }
.chrome { width: 48px; height: 48px; margin-left: 16px; border-radius: 5px; background: #ededed; display: flex; flex-direction: column; align-items: center; padding: 2px 0 0 6px; }
.run { width: 20px; height: 4px; border-radius: 2px; background: #1279d6; margin: 5px 6px 0 0; }
.vs { width: 30px; height: 48px; display: flex; flex-direction: column; align-items: center; padding-top: 9px; }
.chrome + .vs { margin-left: 16px; }
.dot { width: 8px; height: 4px; border-radius: 2px; background: #7d7d7d; margin-top: 5px; }
.tray { display: flex; align-items: center; flex: 1; padding-right: 25px; }
.up { margin-left: 169px; }
.cloud { margin-left: 22px; }
.sync { margin-left: 18px; }
.eng { margin-left: 23px; width: 28px; font-size: 15px; letter-spacing: -.7px; white-space: nowrap; }
.net { margin-left: 22px; }
.vol { margin-left: 10px; }
.bat { margin-left: 9px; }
.clock { margin-left: auto; display: flex; flex-direction: column; text-align: right; font-size: 15px; line-height: 20px; letter-spacing: -.3px; white-space: nowrap; margin-top: -2px; }
</style>
